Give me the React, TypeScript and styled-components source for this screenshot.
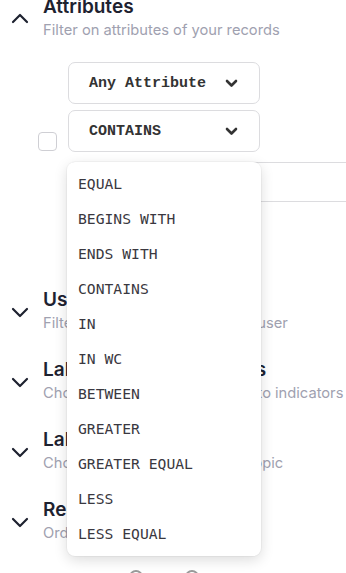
import styled, { createGlobalStyle } from 'styled-components';

const GlobalStyle = createGlobalStyle`
  html, body {
    margin: 0;
    padding: 0;
    background: #ffffff;
    overflow: hidden;
  }
  body {
    font-family: Inter, 'Noto Sans', sans-serif;
    -webkit-font-smoothing: antialiased;
  }
`;

const operators = [
  'EQUAL',
  'BEGINS WITH',
  'ENDS WITH',
  'CONTAINS',
  'IN',
  'IN WC',
  'BETWEEN',
  'GREATER',
  'GREATER EQUAL',
  'LESS',
  'LESS EQUAL',
];

const sections = [
  { title: 'Users', subtitle: 'Filter on records assigned to a user' },
  { title: 'Labels in data indicators', subtitle: 'Choose which labels to assign to indicators' },
  { title: 'Labels', subtitle: 'Choose what labels to add to topic' },
  { title: 'Results', subtitle: 'Order the results' },
];

const Toggle = ({ open }: { open?: boolean }) => (
  <svg width='18' height='18' viewBox='0 0 18 18' fill='none'>
    <polyline
      points={open ? '2,12 9,5 16,12' : '2,6 9,13 16,6'}
      stroke='#1e2230'
      strokeWidth='2.2'
      strokeLinecap='round'
      strokeLinejoin='round'
    />
  </svg>
);

const Caret = () => (
  <svg width='13' height='9' viewBox='0 0 13 9' fill='none'>
    <polyline
      points='2,2 6.5,6.5 11,2'
      stroke='#333333'
      strokeWidth='2.6'
      strokeLinecap='round'
      strokeLinejoin='round'
    />
  </svg>
);

export default function App() {
  return (
    <Page>
      <GlobalStyle />
      <Sections>
        <Section>
          <Head>
            <ToggleCol>
              <Toggle open />
            </ToggleCol>
            <div>
              <Title>Attributes</Title>
              <Subtitle>Filter on attributes of your records</Subtitle>
            </div>
          </Head>
          <FilterRow>
            <Checkbox />
            <Fields>
              <Select>
                <SelectText>Any Attribute</SelectText>
                <Caret />
              </Select>
              <SelectWrap>
                <Select>
                  <SelectText>CONTAINS</SelectText>
                  <Caret />
                </Select>
                <Menu>
                  {operators.map((op) => (
                    <MenuItem key={op}>{op}</MenuItem>
                  ))}
                </Menu>
              </SelectWrap>
              <ValueInput />
            </Fields>
          </FilterRow>
        </Section>
        {sections.map(({ title, subtitle }, index) => (
          <Section key={title}>
            <Head>
              <ToggleCol>
                <Toggle />
              </ToggleCol>
              <div>
                <Title>{title}</Title>
                <Subtitle>{subtitle}</Subtitle>
              </div>
            </Head>
            {index === sections.length - 1 && (
              <RadioRow>
                <Radio />
                <Radio />
              </RadioRow>
            )}
          </Section>
        ))}
      </Sections>
    </Page>
  );
}

const Page = styled.div`
  width: 346px;
  height: 573px;
  overflow: hidden;
`;

const Sections = styled.div`
  display: flex;
  flex-direction: column;
  gap: 26px;
  margin-top: -4px;
`;

const Section = styled.section`
  display: flex;
  flex-direction: column;
`;

const Head = styled.div`
  display: grid;
  grid-template-columns: 43px 1fr;
  align-items: center;
`;

const ToggleCol = styled.div`
  display: flex;
  padding-left: 11px;
  padding-top: 2px;
`;

const Title = styled.div`
  font-size: 19px;
  line-height: 22px;
  font-weight: 600;
  color: #1e2230;
  white-space: nowrap;
`;

const Subtitle = styled.div`
  margin-top: 2px;
  font-size: 14.7px;
  line-height: 20px;
  color: #a0a1b0;
  white-space: nowrap;
`;

const FilterRow = styled.div`
  display: flex;
  align-items: flex-start;
  gap: 11px;
  margin: 22px 0 61px 38px;
`;

const Checkbox = styled.div`
  width: 17px;
  height: 17px;
  margin-top: 70px;
  border: 1px solid #cfcfd4;
  border-radius: 4px;
  background: #fff;
  flex-shrink: 0;
`;

const Fields = styled.div`
  display: flex;
  flex-direction: column;
  gap: 6px;
`;

const SelectWrap = styled.div`
  position: relative;
`;

const Select = styled.div`
  box-sizing: border-box;
  width: 192px;
  height: 42px;
  display: flex;
  align-items: center;
  justify-content: space-between;
  padding: 0 21px 0 20px;
  border: 1px solid #dcdcdf;
  border-radius: 7px;
  background: #fff;
`;

const SelectText = styled.span`
  font-family: 'Liberation Mono', 'DejaVu Sans Mono', monospace;
  font-size: 15px;
  font-weight: 700;
  color: #333333;
`;

const ValueInput = styled.div`
  box-sizing: border-box;
  width: 300px;
  height: 40px;
  margin-top: 4px;
  border: 1px solid #dcdcdf;
  border-radius: 7px;
`;

const Menu = styled.div`
  position: absolute;
  top: 52px;
  left: -1px;
  width: 194px;
  box-sizing: border-box;
  padding: 4px 0 5px;
  background: #fff;
  border-radius: 8px;
  box-shadow: 0 4px 14px rgba(0, 0, 0, 0.14), 0 0 0 1px rgba(0, 0, 0, 0.03);
  z-index: 10;
`;

const MenuItem = styled.div`
  height: 35px;
  display: flex;
  align-items: center;
  padding-left: 11px;
  font-family: 'DejaVu Sans Mono', 'Liberation Mono', monospace;
  font-size: 14.7px;
  color: #3a3840;
`;

const RadioRow = styled.div`
  display: flex;
  gap: 42px;
  margin: 27px 0 0 129px;
`;

const Radio = styled.div`
  width: 10px;
  height: 10px;
  border: 2px solid #9a9a9a;
  border-radius: 50%;
`;
